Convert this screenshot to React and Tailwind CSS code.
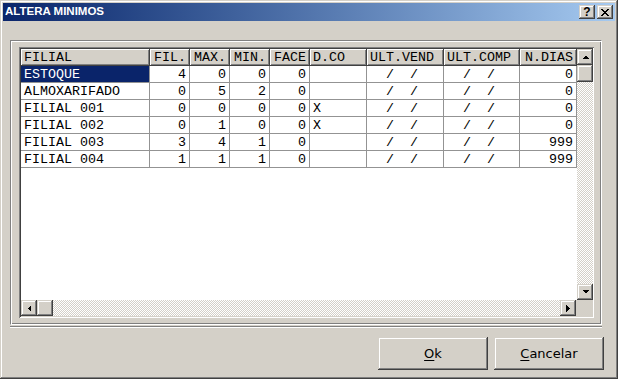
import React from "react";

const raised =
  "shadow-[inset_-1px_-1px_0_#404040,inset_1px_1px_0_#d4d0c8,inset_-2px_-2px_0_#808080,inset_2px_2px_0_#ffffff]";

const columns = [
  { key: "f", label: "FILIAL", w: "w-[129px]", right: false },
  { key: "fil", label: "FIL.", w: "w-[40px]", right: true },
  { key: "max", label: "MAX.", w: "w-[40px]", right: true },
  { key: "min", label: "MIN.", w: "w-[40px]", right: true },
  { key: "face", label: "FACE", w: "w-[40px]", right: true },
  { key: "dco", label: "D.CO", w: "w-[57px]", right: false },
  { key: "uv", label: "ULT.VEND", w: "w-[77px]", right: false },
  { key: "uc", label: "ULT.COMP", w: "w-[76px]", right: false },
  { key: "nd", label: "N.DIAS", w: "w-[57px]", right: true },
];

const rows = [
  ["ESTOQUE", "4", "0", "0", "0", "", "  /  /", "  /  /", "0"],
  ["ALMOXARIFADO", "0", "5", "2", "0", "", "  /  /", "  /  /", "0"],
  ["FILIAL 001", "0", "0", "0", "0", "X", "  /  /", "  /  /", "0"],
  ["FILIAL 002", "0", "1", "0", "0", "X", "  /  /", "  /  /", "0"],
  ["FILIAL 003", "3", "4", "1", "0", "", "  /  /", "  /  /", "999"],
  ["FILIAL 004", "1", "1", "1", "0", "", "  /  /", "  /  /", "999"],
];

function Arrow({ dir }) {
  const pts = {
    up: "0,4 7,4 3.5,0.5",
    down: "0,0 7,0 3.5,3.5",
    left: "4,0 4,7 0.5,3.5",
    right: "0,0 0,7 3.5,3.5",
  }[dir];
  const vert = dir === "up" || dir === "down";
  return (
    <svg
      width={vert ? 7 : 4}
      height={vert ? 4 : 7}
      viewBox={vert ? "0 0 7 4" : "0 0 4 7"}
      shapeRendering="crispEdges"
    >
      <polygon points={pts} fill="#000" />
    </svg>
  );
}

function ScrollBtn({ dir }) {
  return (
    <div
      className={`w-[16px] h-[16px] shrink-0 bg-[#d4d0c8] flex items-center justify-center ${raised}`}
    >
      <Arrow dir={dir} />
    </div>
  );
}

const track =
  "bg-[image:repeating-conic-gradient(#ffffff_0_25%,#d4d0c8_0_50%)] bg-[length:2px_2px]";

export default function App() {
  return (
    <div
      className={`w-[618px] h-[379px] bg-[#d4d0c8] p-[3px] flex flex-col overflow-hidden ${raised}`}
      style={{ fontFamily: '"Liberation Sans", Arial, sans-serif' }}
    >
      {/* Title bar */}
      <div className="h-[18px] shrink-0 flex items-center pl-[2px] pr-[2px] bg-gradient-to-r from-[#0a246a] to-[#a6caf0]">
        <span className="text-white font-bold text-[11.5px] leading-none">
          ALTERA MINIMOS
        </span>
        <div className="ml-auto flex items-center">
          <div
            className={`w-[16px] h-[14px] bg-[#d4d0c8] flex items-center justify-center text-black font-bold text-[12px] leading-none ${raised}`}
          >
            <span className="-mt-[1px]">?</span>
          </div>
          <div
            className={`ml-[2px] w-[16px] h-[14px] bg-[#d4d0c8] flex items-center justify-center ${raised}`}
          >
            <svg width="8" height="7" viewBox="0 0 8 7" shapeRendering="crispEdges">
              <path
                d="M0 0h2v1h-2zM6 0h2v1h-2zM1 1h2v1h-2zM5 1h2v1h-2zM2 2h4v1h-4zM3 3h2v1h-2zM2 4h4v1h-4zM1 5h2v1h-2zM5 5h2v1h-2zM0 6h2v1h-2zM6 6h2v1h-2z"
                fill="#000"
              />
            </svg>
          </div>
        </div>
      </div>

      {/* Content */}
      <div className="flex-1 flex flex-col pl-[7px] pr-[13px] pt-[19px]">
        {/* Group box */}
        <div className="h-[285px] border border-t-[#808080] border-l-[#808080] border-r-white border-b-white shadow-[inset_1px_1px_0_#ffffff,inset_-1px_-1px_0_#808080] pt-[6px] pl-[8px] pr-[7px] pb-[6px]">
          {/* Grid */}
          <div
            className="w-full h-full p-[2px] bg-[#d4d0c8] shadow-[inset_1px_1px_0_#808080,inset_-1px_-1px_0_#ffffff,inset_2px_2px_0_#404040,inset_-2px_-2px_0_#d4d0c8] flex flex-col"
            style={{ fontFamily: '"Liberation Mono", "Courier New", monospace' }}
          >
            <div className="flex-1 flex min-h-0">
              {/* Table */}
              <div className="flex-1 bg-white flex flex-col text-[13.33px] leading-none text-black">
                <div className="flex h-[17px]">
                  {columns.map((c) => (
                    <div
                      key={c.key}
                      className={`${c.w} shrink-0 h-[17px] pt-[2px] bg-[#d4d0c8] border-r border-b border-[#404040] shadow-[inset_1px_1px_0_#ffffff,inset_-1px_-1px_0_#808080] flex items-center whitespace-pre overflow-hidden ${
                        c.right ? "justify-end pr-[3px]" : "pl-[3px]"
                      }`}
                    >
                      {c.label}
                    </div>
                  ))}
                </div>
                {rows.map((r, ri) => (
                  <div key={ri} className="flex h-[17px]">
                    {r.map((v, ci) => {
                      const c = columns[ci];
                      const sel = ri === 0 && ci === 0;
                      return (
                        <div
                          key={ci}
                          className={`${c.w} shrink-0 h-[17px] pt-[2px] border-r border-b border-[#939393] flex items-center whitespace-pre overflow-hidden ${
                            c.right ? "justify-end pr-[3px]" : "pl-[3px]"
                          } ${sel ? "bg-[#0a246a] text-white" : ""}`}
                        >
                          {v}
                        </div>
                      );
                    })}
                  </div>
                ))}
              </div>
              {/* Vertical scrollbar */}
              <div className="w-[16px] shrink-0 flex flex-col">
                <ScrollBtn dir="up" />
                <div className={`w-[16px] h-[17px] shrink-0 bg-[#d4d0c8] ${raised}`} />
                <div className={`flex-1 ${track}`} />
                <ScrollBtn dir="down" />
              </div>
            </div>
            {/* Horizontal scrollbar */}
            <div className="h-[16px] shrink-0 flex">
              <ScrollBtn dir="left" />
              <div className={`w-[16px] h-[16px] shrink-0 bg-[#d4d0c8] ${raised}`} />
              <div className={`flex-1 ${track}`} />
              <ScrollBtn dir="right" />
              <div className="w-[16px] h-[16px] shrink-0 bg-[#d4d0c8]" />
            </div>
          </div>
        </div>

        {/* Separator */}
        <div className="mt-[1px] h-[2px] border-t border-t-[#808080] border-b border-b-white" />

        {/* Buttons */}
        <div
          className="mt-[9px] -mr-[2px] flex justify-end gap-[6px] text-[13px] text-black"
          style={{ fontFamily: '"DejaVu Sans", Tahoma, sans-serif' }}
        >
          <div className={`w-[110px] h-[33px] bg-[#d4d0c8] flex items-center justify-center ${raised}`}>
            <span>
              <span className="underline underline-offset-2">O</span>k
            </span>
          </div>
          <div className={`w-[110px] h-[33px] bg-[#d4d0c8] flex items-center justify-center ${raised}`}>
            <span>
              <span className="underline underline-offset-2">C</span>ancelar
            </span>
          </div>
        </div>
      </div>
    </div>
  );
}
